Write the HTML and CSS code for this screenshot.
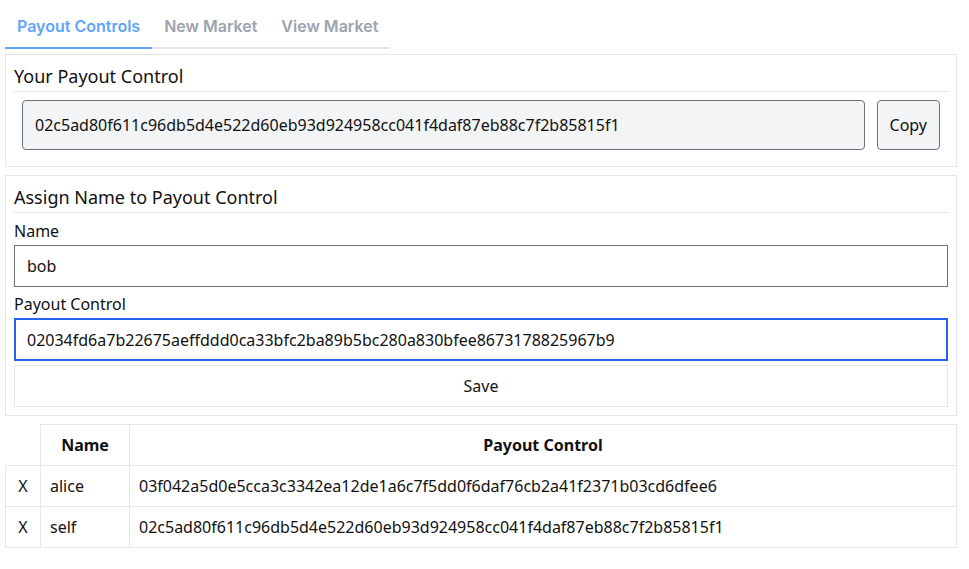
FILE: index.html
```html
<!DOCTYPE html>
<html lang="en">
<head>
<meta charset="utf-8">
<title>Payout Controls</title>
<link rel="stylesheet" href="styles.css">
</head>
<body>
<div class="page">
  <nav class="tabs">
    <a class="tab active">Payout Controls</a>
    <a class="tab">New Market</a>
    <a class="tab">View Market</a>
  </nav>

  <section class="panel">
    <h2 class="panel-title">Your Payout Control</h2>
    <div class="copy-row">
      <input class="readonly-input" type="text" readonly value="02c5ad80f611c96db5d4e522d60eb93d924958cc041f4daf87eb88c7f2b85815f1">
      <button class="copy-btn">Copy</button>
    </div>
  </section>

  <section class="panel">
    <h2 class="panel-title">Assign Name to Payout Control</h2>
    <label class="field-label">Name</label>
    <input class="text-input" type="text" value="bob">
    <label class="field-label">Payout Control</label>
    <div class="focus-wrap">
      <input class="text-input focused" type="text" value="02034fd6a7b22675aeffddd0ca33bfc2ba89b5bc280a830bfee8673178825967b9">
    </div>
    <button class="save-btn">Save</button>
  </section>

  <table class="controls-table">
    <colgroup><col class="c-x"><col class="c-name"><col></colgroup>
    <thead>
      <tr><th class="blank"></th><th>Name</th><th>Payout Control</th></tr>
    </thead>
    <tbody>
      <tr><td class="del">X</td><td>alice</td><td>03f042a5d0e5cca3c3342ea12de1a6c7f5dd0f6daf76cb2a41f2371b03cd6dfee6</td></tr>
      <tr><td class="del">X</td><td>self</td><td>02c5ad80f611c96db5d4e522d60eb93d924958cc041f4daf87eb88c7f2b85815f1</td></tr>
    </tbody>
  </table>
</div>
</body>
</html>
```

FILE: styles.css
```css
* { box-sizing: border-box; }
html, body { margin: 0; padding: 0; background: #fff; }
body {
  font-family: "Noto Sans", "Open Sans", sans-serif;
  font-size: 16px;
  line-height: 24px;
  color: #111111;
}
.page { padding: 5px 12px 5px 5px; }

.tabs {
  display: flex;
  width: max-content;
  border-bottom: 2px solid #e5e7eb;
}
.tab {
  font-family: Inter, sans-serif;
  font-weight: 600;
  font-size: 16px;
  line-height: 24px;
  padding: 9px 12px 9px;
  white-space: nowrap;
  color: #9ca3af;
  margin-bottom: -2px;
  border-bottom: 2px solid transparent;
}
.tab.active { color: #60a5fa; border-bottom-color: #60a5fa; }

.panel {
  border: 1px solid #e5e7eb;
  padding: 8px;
  margin-top: 5px;
}
.panel + .panel { margin-top: 8px; }
.panel-title {
  margin: 0;
  font-size: 18px;
  font-weight: 400;
  line-height: 27px;
  padding-bottom: 1px;
  border-bottom: 1px solid #e5e7eb;
}
.copy-row {
  display: flex;
  gap: 12px;
  padding: 8px;
}
.readonly-input {
  flex: 1;
  height: 50px;
  font: inherit;
  color: inherit;
  background: #f3f4f6;
  border: 1px solid #6b7280;
  border-radius: 4px;
  padding: 0 12px;
}
.copy-btn {
  height: 50px;
  font: inherit;
  color: inherit;
  background: #f3f4f6;
  border: 1px solid #6b7280;
  border-radius: 4px;
  padding: 0 12px;
}
.field-label { display: block; margin-top: 6px; }
.field-label + .text-input, .field-label + .focus-wrap { margin-top: 2px; }
.field-label:nth-of-type(2) { margin-top: 5px; }
.text-input {
  display: block;
  width: 100%;
  height: 42px;
  font: inherit;
  color: inherit;
  background: #fff;
  border: 1px solid #6b7280;
  border-radius: 0;
  padding: 0 12px;
  outline: none;
}
.text-input.focused { border: 2px solid #2563eb; padding: 0 11px; height: 43px; }
.save-btn {
  display: block;
  width: 100%;
  height: 42px;
  margin-top: 4px;
  font: inherit;
  color: inherit;
  background: #fff;
  border: 1px solid #e5e7eb;
}

.controls-table {
  width: 100%;
  margin-top: 8px;
  border-collapse: collapse;
}
.c-x { width: 35px; }
.c-name { width: 89px; }
.controls-table th, .controls-table td {
  border: 1px solid #e5e7eb;
  padding: 8px 9px;
  line-height: 24px;
  text-align: left;
  font-weight: 400;
}
.controls-table th { font-weight: 700; text-align: center; }
.controls-table th.blank { border-top: none; border-left: none; }
.controls-table td.del { text-align: center; padding: 8px 0; }
```
